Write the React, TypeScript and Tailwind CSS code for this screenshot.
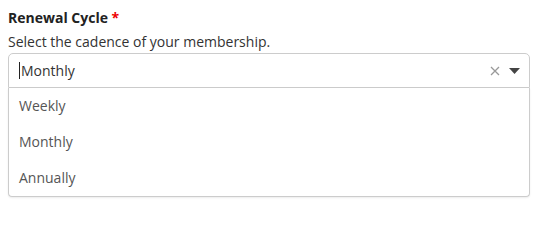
const options = ["Weekly", "Monthly", "Annually"];

export default function App() {
  return (
    <div className="w-[540px] h-[211px] bg-white p-2 font-['Open_Sans',sans-serif] text-[#333]">
      <label className="block text-sm leading-5 font-bold text-[#222]">
        Renewal Cycle <span className="text-[#e00]">*</span>
      </label>
      <p className="mt-1 text-sm leading-5 text-[#333]">
        Select the cadence of your membership.
      </p>
      <div className="relative mt-px w-[522px]">
        <div className="flex items-center h-[35px] pl-[10px] pr-[9px] border border-[#ccc] rounded-t-[5px]">
          <span className="w-px h-[17px] bg-[#222] mr-px" />
          <span className="flex-1 text-sm text-[#333]">Monthly</span>
          <svg width="10" height="10" viewBox="0 0 10 10" className="mr-[9px]">
            <path d="M1 1L9 9M9 1L1 9" stroke="#999" strokeWidth="1.3" />
          </svg>
          <svg width="11" height="6" viewBox="0 0 11 6">
            <path d="M0 0H11L5.5 6Z" fill="#444" />
          </svg>
        </div>
        <ul className="border border-t-0 border-[#ccc] rounded-b-[4px] shadow-[0_1px_2px_rgba(0,0,0,0.08)]">
          {options.map((o) => (
            <li key={o} className="flex items-center h-[36px] pl-[10px] text-sm text-[#555]">
              {o}
            </li>
          ))}
        </ul>
      </div>
    </div>
  );
}
